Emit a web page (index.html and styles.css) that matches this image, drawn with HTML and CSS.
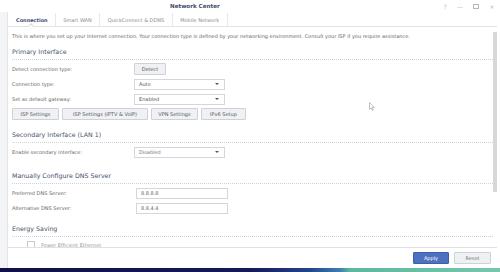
FILE: index.html
```html
<!DOCTYPE html>
<html lang="en">
<head>
    <meta charset="UTF-8">
    <title>Network Center</title>
    <link rel="stylesheet" href="styles.css">
</head>
<body>
<div class="window">
    <div class="titlebar">
        <span class="title">Network Center</span>
        <div class="win-controls">
            <span class="ctl">?</span>
            <span class="ctl">&#8212;</span>
            <span class="ctl box"></span>
            <span class="ctl">&#215;</span>
        </div>
    </div>
    <div class="frame">
        <div class="side-strip"></div>
        <div class="main">
            <div class="tabs">
                <div class="tab active">Connection<span class="notch"></span></div>
                <div class="tab">Smart WAN</div>
                <div class="tab">QuickConnect &amp; DDNS</div>
                <div class="tab">Mobile Network</div>
            </div>
            <div class="body">
                <div class="content">
                    <p class="desc">This is where you set up your Internet connection. Your connection type is defined by your networking environment. Consult your ISP if you require assistance.</p>

                    <div class="section-title first">Primary Interface</div>
                    <div class="row">
                        <span class="label">Detect connection type:</span>
                        <button class="btn detect">Detect</button>
                    </div>
                    <div class="row">
                        <span class="label">Connection type:</span>
                        <div class="select">Auto<span class="arrow"></span></div>
                    </div>
                    <div class="row">
                        <span class="label">Set as default gateway:</span>
                        <div class="select">Enabled<span class="arrow"></span></div>
                    </div>
                    <div class="row btn-row">
                        <button class="btn w-isp">ISP Settings</button>
                        <button class="btn w-iptv">ISP Settings (IPTV &amp; VoIP)</button>
                        <button class="btn w-vpn">VPN Settings</button>
                        <button class="btn w-ipv6">IPv6 Setup</button>
                    </div>

                    <div class="section-title">Secondary Interface (LAN 1)</div>
                    <div class="row">
                        <span class="label">Enable secondary interface:</span>
                        <div class="select muted">Disabled<span class="arrow"></span></div>
                    </div>

                    <div class="section-title dns">Manually Configure DNS Server</div>
                    <div class="row">
                        <span class="label">Preferred DNS Server:</span>
                        <div class="text-input">8.8.8.8</div>
                    </div>
                    <div class="row">
                        <span class="label">Alternative DNS Server:</span>
                        <div class="text-input">8.8.4.4</div>
                    </div>

                    <div class="section-title energy">Energy Saving</div>
                    <div class="row check-row">
                        <span class="checkbox"></span>
                        <span class="check-label">Power Efficient Ethernet</span>
                    </div>
                </div>
                <div class="scroll-track"><div class="scroll-thumb"></div></div>
            </div>
            <div class="footer">
                <button class="btn primary">Apply</button>
                <button class="btn reset">Reset</button>
            </div>
        </div>
    </div>
    <div class="taskbar"></div>
</div>
<svg class="cursor" width="6" height="9" viewBox="0 0 6 9">
    <path d="M0.5 0.5 L0.5 7.5 L2.2 5.9 L3.4 8.5 L4.3 8.1 L3.1 5.5 L5.5 5.5 Z" fill="#fff" stroke="#9a9a9a" stroke-width="0.6"/>
</svg>
</body>
</html>
```

FILE: styles.css
```css
body {
    margin: 0;
    font-family: "DejaVu Sans", Verdana, sans-serif;
    font-size: 5px;
    color: #5a5a5a;
    background: #fff;
}
.window {
    width: 500px;
    height: 272px;
    display: flex;
    flex-direction: column;
    overflow: hidden;
}
.titlebar {
    height: 12px;
    flex: none;
    display: flex;
    align-items: center;
    background: #fff;
}
.title {
    margin-left: 170px;
    font-size: 5.6px;
    font-weight: bold;
    color: #3e4c6c;
}
.win-controls {
    margin-left: auto;
    margin-right: 5px;
    display: flex;
    align-items: center;
    gap: 9px;
    color: #b4b8c0;
    font-size: 6px;
}
.ctl {
    width: 6px;
    text-align: center;
}
.ctl.box {
    width: 4px;
    height: 3px;
    border: 1px solid #b4b8c0;
    border-top-width: 1.5px;
    margin: 0 1px;
}
.frame {
    flex: 1;
    display: flex;
    min-height: 0;
}
.side-strip {
    width: 7px;
    flex: none;
    background: #f3f4f6;
    border-right: 1px solid #e2e4e8;
}
.main {
    flex: 1;
    display: flex;
    flex-direction: column;
    min-width: 0;
}
.tabs {
    height: 13px;
    flex: none;
    display: flex;
    border-bottom: 1px solid #e1e3e7;
    margin-right: 3px;
    margin-top: 1px;
}
.tab {
    position: relative;
    padding: 0 7.5px;
    display: flex;
    align-items: center;
    border-right: 1px solid #e6e8eb;
    color: #8c8c8c;
    white-space: nowrap;
}
.tab.active {
    color: #3f4d72;
    font-weight: bold;
    padding: 0 7px 0 8px;
}
.notch {
    position: absolute;
    left: 21px;
    bottom: -2px;
    width: 3px;
    height: 3px;
    background: #fff;
    border-left: 1px solid #d6d9de;
    border-top: 1px solid #d6d9de;
    transform: rotate(45deg);
}
.body {
    flex: 1;
    display: flex;
    min-height: 0;
    overflow: hidden;
}
.content {
    flex: 1;
    padding: 4px 0 0 4px;
    min-width: 0;
}
.desc {
    margin: 0;
    height: 10px;
    line-height: 10px;
    white-space: nowrap;
    color: #666;
}
.section-title {
    margin-top: 10px;
    height: 10px;
    line-height: 10px;
    padding-bottom: 2px;
    border-bottom: 1px dotted #cfd2d6;
    font-size: 6.3px;
    color: #44526a;
}
.section-title.first {
    margin-top: 6px;
}
.section-title.dns {
    margin-top: 13px;
}
.section-title.energy {
    margin-top: 10px;
}
.row {
    display: flex;
    align-items: center;
    height: 12px;
    margin-top: 3px;
}
.label {
    width: 122px;
    flex: none;
    color: #666;
}
.btn {
    font-family: inherit;
    font-size: 5px;
    color: #555;
    background: #eff1f4;
    border: 1px solid #cdd1d8;
    border-radius: 1px;
    height: 12px;
    padding: 0;
    margin: 0;
    flex: none;
}
.detect {
    width: 32px;
}
.select {
    width: 91px;
    height: 11px;
    box-sizing: border-box;
    border: 1px solid #d3d6db;
    background: #fff;
    display: flex;
    align-items: center;
    padding-left: 4px;
    color: #555;
}
.select.muted {
    color: #777;
}
.arrow {
    margin-left: auto;
    margin-right: 5px;
    width: 0;
    height: 0;
    border-left: 2px solid transparent;
    border-right: 2px solid transparent;
    border-top: 2px solid #555;
}
.btn-row {
    gap: 3px;
}
.w-isp { width: 47px; }
.w-iptv { width: 86px; }
.w-vpn { width: 47px; }
.w-ipv6 { width: 45px; }
.text-input {
    margin-left: 2px;
    width: 92px;
    height: 11px;
    box-sizing: border-box;
    border: 1px solid #d3d6db;
    background: #fff;
    display: flex;
    align-items: center;
    padding-left: 4px;
    color: #666;
}
.check-row {
    align-items: flex-start;
    margin-top: 4px;
}
.checkbox {
    width: 6px;
    height: 6px;
    border: 1px solid #c6c9ce;
    margin: 0 6px 0 15px;
    flex: none;
}
.check-label {
    color: #999;
    line-height: 8px;
}
.scroll-track {
    width: 4px;
    flex: none;
    margin-right: 3px;
}
.scroll-thumb {
    margin-top: 5px;
    height: 160px;
    background: #d7d8da;
}
.footer {
    height: 20px;
    flex: none;
    border-top: 1px solid #dfe1e5;
    margin-right: 3px;
    display: flex;
    align-items: center;
    justify-content: flex-end;
    gap: 5px;
    padding-right: 6px;
    background: #fff;
}
.primary {
    width: 36px;
    background: #4d70bf;
    border-color: #3d5ea8;
    color: #fff;
}
.reset {
    width: 37px;
    background: #eef0f3;
    color: #777;
}
.taskbar {
    height: 4px;
    flex: none;
    background: linear-gradient(to right, #0f1046 0%, #15195a 50%, #24448e 62%, #3f7fb0 68%, #5cb89f 70%, #78c6ad 100%);
}
.cursor {
    position: absolute;
    left: 369px;
    top: 102px;
}
```
